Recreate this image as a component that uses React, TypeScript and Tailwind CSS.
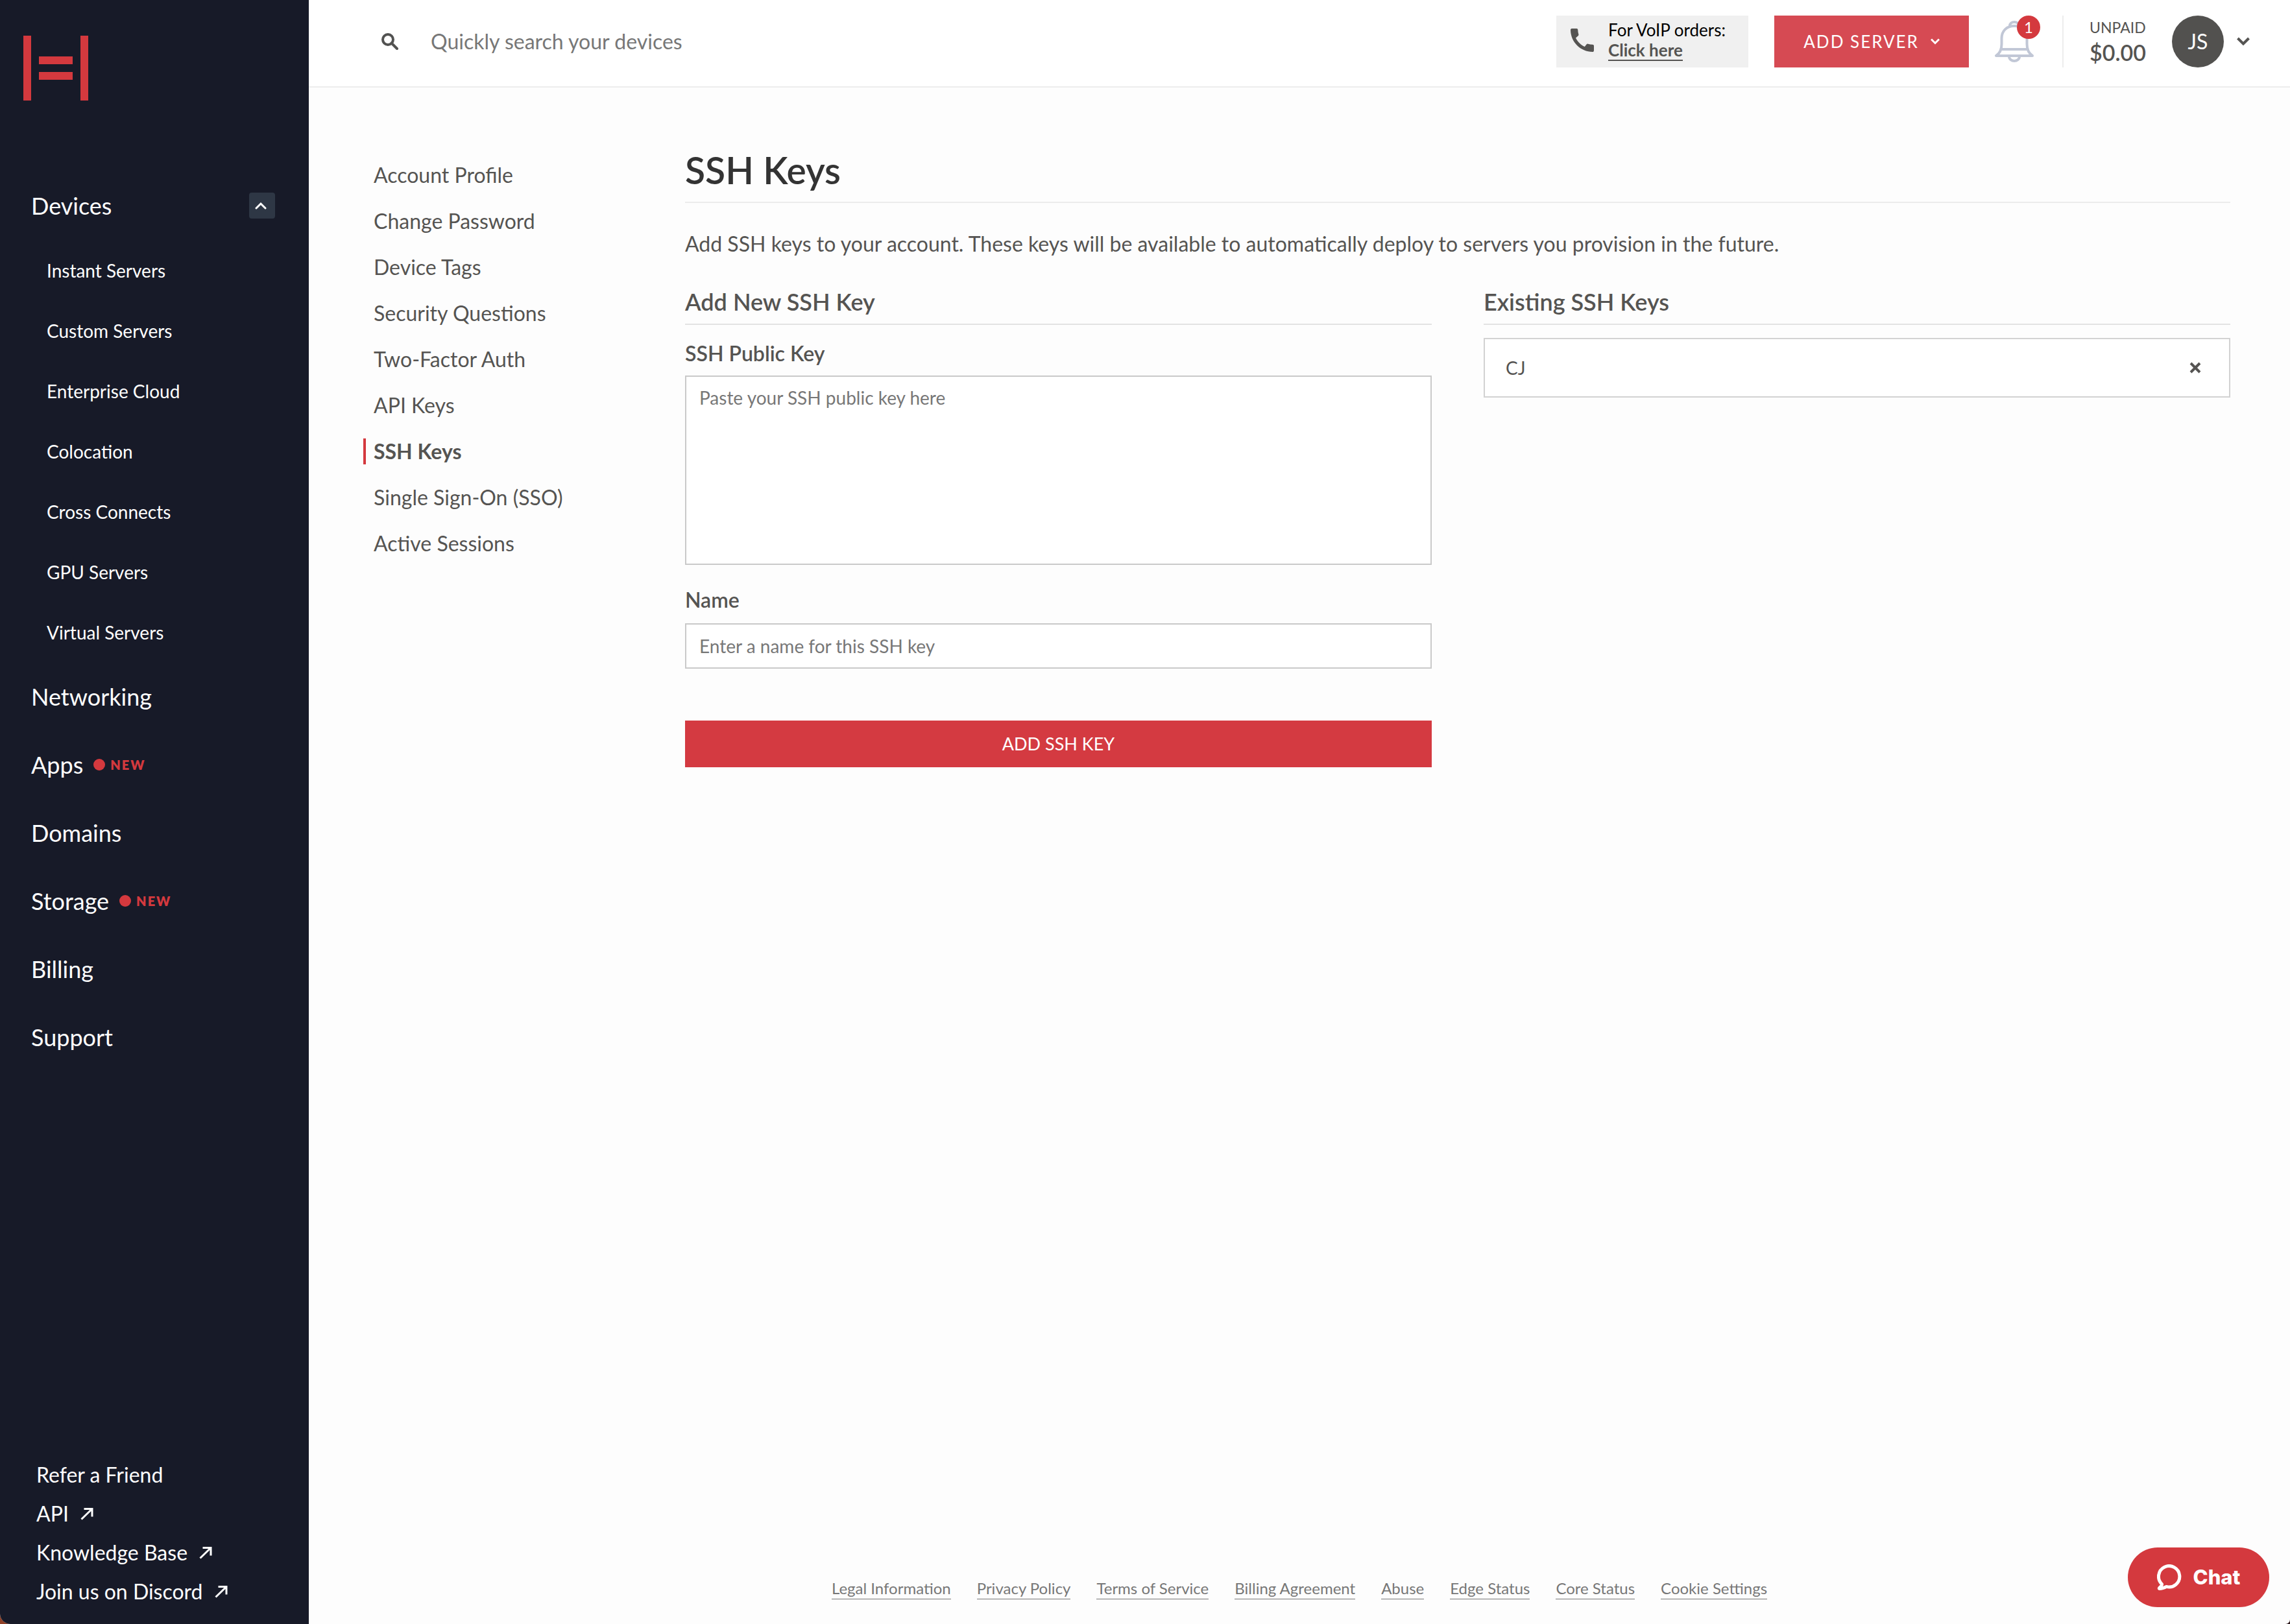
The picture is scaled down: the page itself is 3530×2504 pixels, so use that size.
import React from "react";

const deviceLinks = [
  "Instant Servers",
  "Custom Servers",
  "Enterprise Cloud",
  "Colocation",
  "Cross Connects",
  "GPU Servers",
  "Virtual Servers",
];

const sections = [
  { label: "Networking" },
  { label: "Apps", isNew: true },
  { label: "Domains" },
  { label: "Storage", isNew: true },
  { label: "Billing" },
  { label: "Support" },
];

const bottomLinks = [
  { label: "Refer a Friend", external: false },
  { label: "API", external: true },
  { label: "Knowledge Base", external: true },
  { label: "Join us on Discord", external: true },
];

const accountLinks = [
  "Account Profile",
  "Change Password",
  "Device Tags",
  "Security Questions",
  "Two-Factor Auth",
  "API Keys",
  "SSH Keys",
  "Single Sign-On (SSO)",
  "Active Sessions",
];

const footerLinks = [
  "Legal Information",
  "Privacy Policy",
  "Terms of Service",
  "Billing Agreement",
  "Abuse",
  "Edge Status",
  "Core Status",
  "Cookie Settings",
];

function Logo() {
  return (
    <svg className="size-[100px]" viewBox="0 0 100 100" fill="#d4393e" aria-hidden="true">
      <rect width="12" height="100" />
      <rect x="88" width="12" height="100" />
      <rect x="24" y="32" width="52" height="12" />
      <rect x="24" y="56" width="52" height="12" />
    </svg>
  );
}

function ExternalArrow() {
  return (
    <svg className="size-5" viewBox="0 0 20 20" fill="none" stroke="currentColor" strokeWidth="3" aria-hidden="true">
      <path d="M5.500 2.500H18V14.500M18 2.500L1.500 18.500" />
    </svg>
  );
}

function Bell() {
  return (
    <svg className="h-16 w-[60px]" viewBox="0 0 60 64" fill="none" stroke="#c1c7d6" strokeWidth="4" strokeLinejoin="round" strokeLinecap="round" aria-hidden="true">
      <path d="M23 8C23 4 26 2 30 2s7 2 7 6" />
      <path d="M30 8C18 8 10.500 16 10.500 27V36C10.500 44 8 50 2 54H58C52 50 49.500 44 49.500 36V27C49.500 16 42 8 30 8Z" />
      <path d="M10 44H50" />
      <path d="M22 55C22 59.500 26 62 30 62s8-2.500 8-7" />
    </svg>
  );
}

function Sidebar() {
  return (
    <aside className="flex w-[476px] shrink-0 flex-col bg-[#171a28] text-white">
      <a href="#home" aria-label="Home" className="mt-[55px] ml-9 self-start">
        <Logo />
      </a>
      <nav aria-label="Main" className="mt-[109px] text-[36px]">
        <div className="flex h-[106px] items-center justify-between pr-[52px] pl-12">
          <a href="#devices">Devices</a>
          <button type="button" aria-label="Collapse devices" className="flex size-10 items-center justify-center rounded-[4px] bg-[#2e3745]">
            <svg className="mr-1 h-3 w-[18px]" viewBox="0 0 18 12" fill="none" stroke="white" strokeWidth="3" strokeLinecap="round" aria-hidden="true">
              <path d="M2 10L9 3L16 10" />
            </svg>
          </button>
        </div>
        <ul className="text-[28px]">
          {deviceLinks.map((label) => (
            <li key={label} className="flex h-[93px] items-center pl-[72px]">
              <a href="#devices">{label}</a>
            </li>
          ))}
        </ul>
        <ul>
          {sections.map(({ label, isNew }) => (
            <li key={label} className="flex h-[105px] items-center pl-12">
              <a href="#section" className="flex items-center">
                {label}
                {isNew && (
                  <>
                    <span className="ml-4 size-[18px] rounded-full bg-[#d4393e]" />
                    <span className="ml-2 text-[20px] font-extrabold tracking-[2px] text-[#d4393e]">NEW</span>
                  </>
                )}
              </a>
            </li>
          ))}
        </ul>
      </nav>
      <ul className="mt-auto pb-5 pl-14 text-[32px]">
        {bottomLinks.map(({ label, external }) => (
          <li key={label} className="h-[60px] leading-[60px]">
            <a href="#link" className="inline-flex items-center gap-[18px]">
              {label}
              {external && <ExternalArrow />}
            </a>
          </li>
        ))}
      </ul>
    </aside>
  );
}

function Header() {
  return (
    <header className="flex h-[135px] shrink-0 items-start border-b-2 border-[#ededed] bg-white pt-6 pr-[62px] pl-28">
      <div className="flex h-20 flex-1 items-center">
        <svg className="size-[26px] shrink-0" viewBox="0 0 26 26" fill="none" stroke="#525251" strokeWidth="4" aria-hidden="true">
          <circle cx="10" cy="10" r="8" />
          <path d="M15.500 15.500L24 24" strokeLinecap="round" />
        </svg>
        <input type="text" aria-label="Search devices" placeholder="Quickly search your devices" className="ml-[50px] flex-1 bg-transparent text-[32px] outline-none placeholder:text-[#777777]" />
      </div>

      <div className="flex h-20 w-[296px] items-center bg-[#f0f0f0] pb-1 pl-[22px] text-[26px] leading-8">
        <svg className="size-9 shrink-0" viewBox="3 3 18 18" fill="#555452" aria-hidden="true">
          <path d="M20.010 15.380c-1.230 0-2.420-.2-3.530-.56-.35-.12-.74-.03-1.010.24l-1.570 1.970c-2.830-1.350-5.480-3.900-6.890-6.830l1.950-1.660c.27-.28.35-.67.24-1.020-.37-1.110-.56-2.300-.56-3.530 0-.54-.45-.99-.99-.99H4.190C3.650 3 3 3.240 3 3.990 3 13.280 10.730 21 20.010 21c.71 0 .99-.63.99-1.180v-3.450c0-.54-.45-.99-.99-.99z" />
        </svg>
        <div className="ml-[22px]">
          <p className="text-black">For VoIP orders:</p>
          <a href="#voip" className="block w-fit border-b-2 border-[#555452] leading-[30px] font-bold text-[#555452]">
            Click here
          </a>
        </div>
      </div>

      <button type="button" className="ml-10 flex h-20 w-[300px] items-center justify-center gap-[18px] bg-[#d64a53] text-[26px] tracking-[2px] text-white">
        ADD SERVER
        <svg className="h-[10px] w-[14px]" viewBox="0 0 14 10" fill="none" stroke="currentColor" strokeWidth="3" aria-hidden="true">
          <path d="M1 1.500L7 7.500L13 1.500" />
        </svg>
      </button>

      <button type="button" aria-label="Notifications, 1 unread" className="relative ml-10 h-20 w-[70px]">
        <Bell />
        <span className="absolute top-0 right-0 flex size-9 items-center justify-center rounded-full bg-[#d4393e] text-[24px] text-white">1</span>
      </button>

      <div className="ml-[34px] h-20 border-l-2 border-[#ededed] pl-10 text-[#555452]">
        <p className="text-[23px] leading-9">UNPAID</p>
        <p className="text-[34px] leading-[42px] font-semibold">$0.00</p>
      </div>

      <button type="button" className="ml-10 flex h-20 items-center gap-5">
        <span className="flex size-20 items-center justify-center rounded-full bg-[#52514f] text-[32px] text-white">JS</span>
        <svg className="h-[14px] w-5" viewBox="0 0 20 14" fill="none" stroke="#555452" strokeWidth="4" aria-label="Account menu">
          <path d="M1.500 2L10 10.500L18.500 2" />
        </svg>
      </button>
    </header>
  );
}

function AccountNav() {
  return (
    <nav aria-label="Account" className="w-[496px] shrink-0 pt-1 text-[32px]">
      <ul>
        {accountLinks.map((label) => {
          const active = label === "SSH Keys";
          return (
            <li key={label} className="flex h-[71px] items-center">
              <a
                href="#account"
                aria-current={active ? "page" : undefined}
                className={
                  active
                    ? "border-l-4 border-[#d4393e] pl-3 leading-10 font-bold"
                    : "border-l-4 border-transparent pl-3 leading-10"
                }
              >
                {label}
              </a>
            </li>
          );
        })}
      </ul>
    </nav>
  );
}

function SectionTitle({ children }: { children: React.ReactNode }) {
  return <h2 className="border-b-2 border-[#e3e3e3] pb-[10px] text-[36px] leading-[48px] font-semibold">{children}</h2>;
}

function SshKeys() {
  return (
    <main className="min-w-0 flex-1">
      <h1 className="border-b-2 border-[#ececec] pb-[17px] text-[57px] leading-[64px] font-semibold text-[#333333]">SSH Keys</h1>
      <p className="mt-[39px] text-[32px] leading-[48px]">
        Add SSH keys to your account. These keys will be available to automatically deploy to servers you provision in the future.
      </p>
      <div className="mt-[41px] grid grid-cols-2 gap-20">
        <form>
          <SectionTitle>Add New SSH Key</SectionTitle>
          <label htmlFor="public-key" className="mt-6 block text-[32px] leading-10 font-semibold">
            SSH Public Key
          </label>
          <textarea id="public-key" placeholder="Paste your SSH public key here" className="mt-[14px] block h-[292px] w-full resize-none border-2 border-[#c9c9c9] bg-white px-5 py-3 text-[28px] leading-10 outline-none placeholder:text-[#777777]" />
          <label htmlFor="key-name" className="mt-[34px] block text-[32px] leading-10 font-semibold">
            Name
          </label>
          <input id="key-name" type="text" placeholder="Enter a name for this SSH key" className="mt-4 block h-[70px] w-full border-2 border-[#c9c9c9] bg-white px-5 text-[28px] outline-none placeholder:text-[#777777]" />
          <button type="button" className="mt-20 h-[72px] w-full bg-[#d43a41] text-[27px] text-white">
            ADD SSH KEY
          </button>
        </form>
        <section>
          <SectionTitle>Existing SSH Keys</SectionTitle>
          <ul className="mt-5">
            <li className="flex h-[92px] items-center justify-between border-2 border-[#d2d2d2] bg-white pr-[43px] pl-8 text-[28px]">
              CJ
              <button type="button" aria-label="Remove CJ">
                <svg className="size-[18px]" viewBox="0 0 18 18" fill="none" stroke="#555452" strokeWidth="4" aria-hidden="true">
                  <path d="M2 2L16 16M16 2L2 16" />
                </svg>
              </button>
            </li>
          </ul>
        </section>
      </div>
    </main>
  );
}

export default function App() {
  return (
    <div className="bg-linear-to-r from-[#8f4027] to-[#2a1518]">
      <div className="relative flex min-h-screen overflow-hidden rounded-br-[7px] rounded-bl-[16px] bg-[#fdfdfd] text-[#555452] [font-family:Lato,'Noto_Sans',sans-serif]">
        <Sidebar />
        <div className="flex min-w-0 flex-1 flex-col">
          <Header />
          <div className="flex pt-[95px] pr-[92px] pl-[84px]">
            <AccountNav />
            <SshKeys />
          </div>
          <footer className="mt-auto flex justify-center gap-10 pt-10 pb-[38px] text-[24px] leading-8 text-[#777777]">
            {footerLinks.map((label) => (
              <a key={label} href="#footer" className="border-b border-[#777777]">
                {label}
              </a>
            ))}
          </footer>
        </div>
        <button type="button" className="absolute right-8 bottom-[26px] flex h-[92px] w-[218px] items-center justify-center gap-[18px] rounded-full bg-[#d4393e] [font-family:Inter,sans-serif] text-[31px] font-extrabold text-white">
          <svg className="h-10 w-[38px]" viewBox="0 0 38 40" fill="none" stroke="currentColor" strokeWidth="5" strokeLinejoin="round" aria-hidden="true">
            <path d="M7.500 30.500A16.200 16.200 0 1 1 14.500 34.400C11 36.500 7 37.500 3.500 37.500C2 36.500 8 34 7.500 30.500Z" />
          </svg>
          Chat
        </button>
      </div>
    </div>
  );
}
